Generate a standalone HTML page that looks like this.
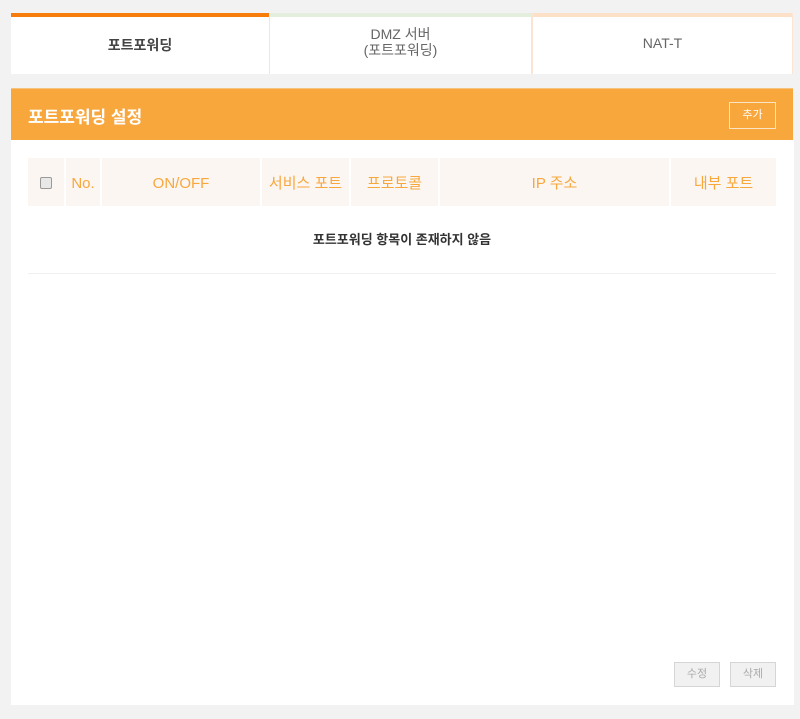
<!DOCTYPE html>
<html><head><meta charset="utf-8"><style>
body{margin:0;width:800px;height:719px;background:#f2f2f2;font-family:"Liberation Sans","Noto Sans CJK KR",sans-serif;position:relative;overflow:hidden}
.tab{position:absolute;top:13px;height:61px;background:#fff;box-sizing:border-box;text-align:center;color:#666;font-size:14px}
.tab .bar{position:absolute;left:0;right:0;top:0;height:4px}
.hdr{position:absolute;left:11px;top:88px;width:782px;height:52px;background:#f8a73d;border-top:1px solid #f6c27c;box-sizing:border-box}
.panel{position:absolute;left:11px;top:140px;width:783px;height:565px;background:#fff}
.th{position:absolute;top:158px;height:48px;background:#fbf6f1;color:#f8a73d;font-size:15px;line-height:52px;text-align:center}
.btn{position:absolute;top:662px;width:46px;height:25px;box-sizing:border-box;border:1px solid #d5d5d5;background:#f1f1f1;color:#aaa;font-size:11px;line-height:23px;text-align:center}
</style></head><body>
<div class="tab" style="left:11px;width:259px;border-right:1px solid #f3e6d8"><div class="bar" style="background:#f77d0a"></div><div style="padding-top:22px;font-weight:bold;color:#444">포트포워딩</div></div>
<div class="tab" style="left:270px;width:262px;border-right:1px solid #f7e4d2"><div class="bar" style="background:#e3efdc"></div><div style="padding-top:13px;line-height:16px">DMZ 서버<br>(포트포워딩)</div></div>
<div class="tab" style="left:532px;width:261px;border-left:1px solid #fce6d3;border-right:1px solid #fce6d3"><div class="bar" style="background:#fde0c8"></div><div style="padding-top:22px">NAT-T</div></div>
<div class="hdr"><div style="position:absolute;left:17px;top:14px;color:#fff;font-size:17px;font-weight:bold">포트포워딩 설정</div>
<div style="position:absolute;left:718px;top:13px;width:47px;height:27px;border:1px solid #fbe3c5;box-sizing:border-box;color:#fff;font-size:11px;text-align:center;line-height:25px">추가</div></div>
<div class="panel"></div>
<div class="th" style="left:28px;width:36px"><div style="position:absolute;left:12px;top:19px;width:10px;height:10px;border:1px solid #999;border-radius:2px;background:#e8e8e8"></div></div>
<div class="th" style="left:66px;width:34px">No.</div>
<div class="th" style="left:102px;width:158px">ON/OFF</div>
<div class="th" style="left:262px;width:87px">서비스 포트</div>
<div class="th" style="left:351px;width:87px">프로토콜</div>
<div class="th" style="left:440px;width:229px">IP 주소</div>
<div class="th" style="left:671px;width:105px">내부 포트</div>
<div style="position:absolute;left:28px;top:229px;width:748px;text-align:center;font-size:13px;font-weight:bold;color:#333">포트포워딩 항목이 존재하지 않음</div>
<div style="position:absolute;left:28px;top:273px;width:748px;height:1px;background:#f0f0f0"></div>
<div class="btn" style="left:674px">수정</div>
<div class="btn" style="left:730px">삭제</div>
</body></html>
